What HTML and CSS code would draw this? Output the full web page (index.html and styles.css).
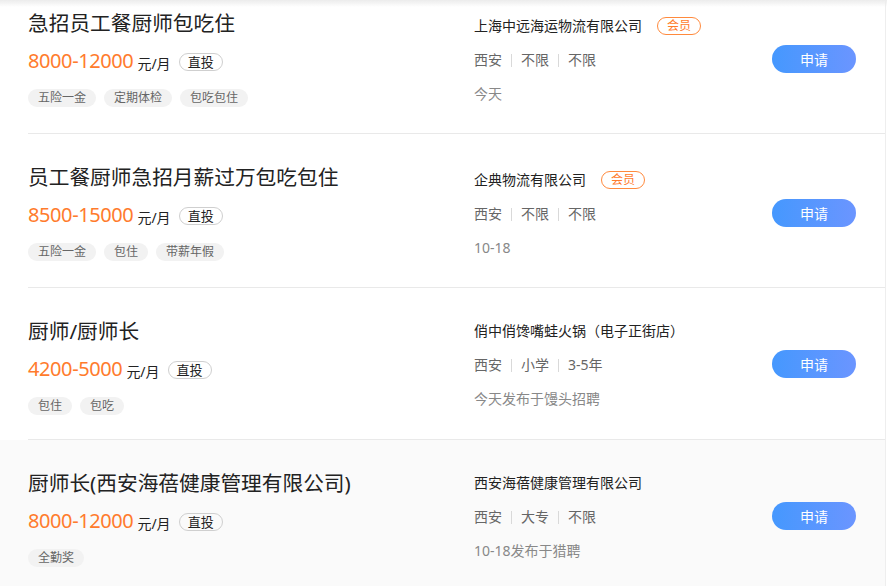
FILE: index.html
```html
<!DOCTYPE html>
<html lang="zh-CN">
<head>
  <meta charset="UTF-8">
  <meta name="viewport" content="width=device-width, initial-scale=1.0">
  <title>职位列表</title>
  <link rel="stylesheet" href="styles.css">
</head>
<body>
  <div class="top-shadow"></div>
  <main class="job-list">
    <div class="job">
      <div class="job-inner">
        <div class="job-main">
          <h3 class="job-title">急招员工餐厨师包吃住</h3>
          <div class="job-salary">
            <span class="salary-num">8000-12000</span>
            <span class="salary-unit">元/月</span>
            <span class="direct">直投</span>
          </div>
          <div class="job-tags">
            <span class="tag">五险一金</span>
            <span class="tag">定期体检</span>
            <span class="tag">包吃包住</span>
          </div>
        </div>
        <div class="job-company">
          <div class="company-name">上海中远海运物流有限公司<span class="vip">会员</span></div>
          <div class="job-meta"><span>西安</span><i class="sep"></i><span>不限</span><i class="sep"></i><span>不限</span></div>
          <div class="job-date">今天</div>
        </div>
        <button class="apply">申请</button>
      </div>
    </div>

    <div class="job">
      <div class="job-inner">
        <div class="job-main">
          <h3 class="job-title">员工餐厨师急招月薪过万包吃包住</h3>
          <div class="job-salary">
            <span class="salary-num">8500-15000</span>
            <span class="salary-unit">元/月</span>
            <span class="direct">直投</span>
          </div>
          <div class="job-tags">
            <span class="tag">五险一金</span>
            <span class="tag">包住</span>
            <span class="tag">带薪年假</span>
          </div>
        </div>
        <div class="job-company">
          <div class="company-name">企典物流有限公司<span class="vip">会员</span></div>
          <div class="job-meta"><span>西安</span><i class="sep"></i><span>不限</span><i class="sep"></i><span>不限</span></div>
          <div class="job-date">10-18</div>
        </div>
        <button class="apply">申请</button>
      </div>
    </div>

    <div class="job job-plain">
      <div class="job-inner">
        <div class="job-main">
          <h3 class="job-title">厨师/厨师长</h3>
          <div class="job-salary">
            <span class="salary-num">4200-5000</span>
            <span class="salary-unit">元/月</span>
            <span class="direct">直投</span>
          </div>
          <div class="job-tags">
            <span class="tag">包住</span>
            <span class="tag">包吃</span>
          </div>
        </div>
        <div class="job-company">
          <div class="company-name">俏中俏馋嘴蛙火锅（电子正街店）</div>
          <div class="job-meta"><span>西安</span><i class="sep"></i><span>小学</span><i class="sep"></i><span>3-5年</span></div>
          <div class="job-date">今天发布于馒头招聘</div>
        </div>
        <button class="apply">申请</button>
      </div>
    </div>

    <div class="job job-plain job-hover">
      <div class="job-inner">
        <div class="job-main">
          <h3 class="job-title">厨师长(西安海蓓健康管理有限公司)</h3>
          <div class="job-salary">
            <span class="salary-num">8000-12000</span>
            <span class="salary-unit">元/月</span>
            <span class="direct">直投</span>
          </div>
          <div class="job-tags">
            <span class="tag">全勤奖</span>
          </div>
        </div>
        <div class="job-company">
          <div class="company-name">西安海蓓健康管理有限公司</div>
          <div class="job-meta"><span>西安</span><i class="sep"></i><span>大专</span><i class="sep"></i><span>不限</span></div>
          <div class="job-date">10-18发布于猎聘</div>
        </div>
        <button class="apply">申请</button>
      </div>
    </div>
  </main>
</body>
</html>
```

FILE: styles.css
```css
body {
  margin: 0;
  padding: 0;
  background: #fff;
  color: #222;
  font-family: "Noto Sans", "Noto Sans CJK SC", sans-serif;
  overflow: hidden;
}

.top-shadow {
  position: fixed;
  top: 0;
  left: 0;
  right: 0;
  height: 7px;
  background: linear-gradient(to bottom, #ececec, rgba(255, 255, 255, 0));
  z-index: 2;
}

.job-list {
  width: 885px;
  margin-top: -20px;
  border-right: 1px solid #eeeeee;
}

.job {
  padding-left: 28px;
  background: #fff;
}
.job-hover {
  background: #fafafa; /* hovered row */
}

.job-inner {
  display: flex;
  align-items: flex-start;
  padding: 31px 29px 26px 0;
  border-bottom: 1px solid #e9e9e9;
}
.job-plain .job-inner {
  padding-bottom: 24px;
}
.job-hover .job-inner {
  border-bottom: none;
}

.job-main {
  width: 446px;
  flex: none;
}

.job-title {
  margin: 0;
  font-size: 20.7px;
  font-weight: normal;
  line-height: 24px;
  color: #222;
}

.job-salary {
  margin-top: 12px;
  height: 28px;
  display: flex;
  align-items: center;
}
.salary-num {
  font-size: 20px;
  letter-spacing: -0.4px;
  color: #ff7b2c;
  line-height: 28px;
}
.salary-unit {
  font-size: 14px;
  color: #222;
  margin-left: 4px;
  margin-top: 3px;
}
.direct {
  margin-left: 8px;
  margin-top: 2px;
  height: 16px;
  line-height: 16px;
  padding: 0 8px;
  border: 1px solid #cfcfcf;
  border-radius: 9px;
  font-size: 13px;
  color: #222;
}

.job-tags {
  margin-top: 14px;
  display: flex;
  gap: 8px;
}
.tag {
  height: 18px;
  line-height: 18px;
  padding: 0 10px;
  border-radius: 9px;
  background: #f2f2f2;
  color: #666;
  font-size: 12px;
}

.job-company {
  flex: 1;
  padding-top: 5px;
  display: flex;
  flex-direction: column;
  gap: 14px;
}
.job-plain .job-company {
  padding-top: 2px;
}
.company-name {
  font-size: 14px;
  line-height: 20px;
  color: #222;
  display: flex;
  align-items: center;
}
.vip {
  margin-left: 15px;
  height: 16px;
  line-height: 16px;
  padding: 0 9px;
  border: 1px solid #ff8a3d;
  border-radius: 9px;
  color: #ff7b2c;
  font-size: 12px;
}
.job-meta {
  font-size: 14px;
  line-height: 20px;
  color: #666;
  display: flex;
  align-items: center;
}
.sep {
  width: 1px;
  height: 13px;
  margin: 0 9px;
  background: #d9d9d9;
}
.job-date {
  font-size: 14px;
  line-height: 20px;
  color: #888;
}

.apply {
  margin-top: 34px;
  width: 84px;
  height: 28px;
  border: none;
  border-radius: 14px;
  background: linear-gradient(to right, #4598fe, #6b95ff);
  color: #fff;
  font-family: inherit;
  font-size: 14px;
  cursor: pointer;
}
.job-plain .apply {
  margin-top: 31px;
}
```
